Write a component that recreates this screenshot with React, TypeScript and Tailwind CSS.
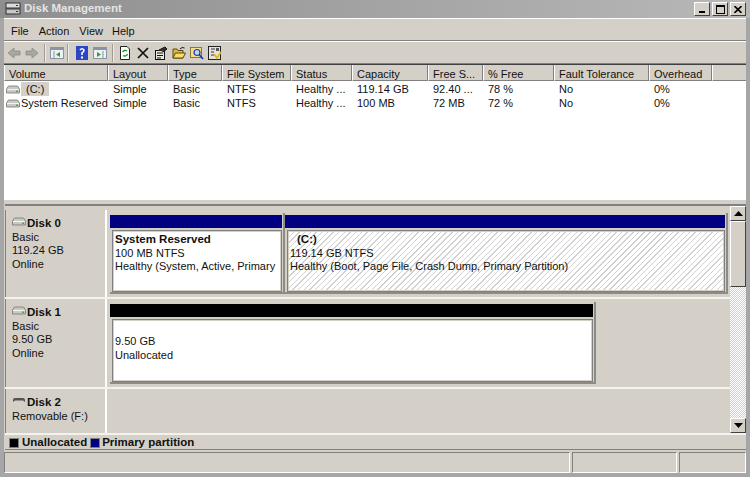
import React from 'react';

const columns = [
  { label: 'Volume', w: 'w-[104px]' },
  { label: 'Layout', w: 'w-[60px]' },
  { label: 'Type', w: 'w-[54px]' },
  { label: 'File System', w: 'w-[69px]' },
  { label: 'Status', w: 'w-[61px]' },
  { label: 'Capacity', w: 'w-[76px]' },
  { label: 'Free S...', w: 'w-[55px]' },
  { label: '% Free', w: 'w-[71px]' },
  { label: 'Fault Tolerance', w: 'w-[95px]' },
  { label: 'Overhead', w: 'w-[63px]' },
];

const rows = [
  ['(C:)', 'Simple', 'Basic', 'NTFS', 'Healthy ...', '119.14 GB', '92.40 ...', '78 %', 'No', '0%'],
  ['System Reserved', 'Simple', 'Basic', 'NTFS', 'Healthy ...', '100 MB', '72 MB', '72 %', 'No', '0%'],
];

function DriveIcon({ removable }: { removable?: boolean }) {
  if (removable) {
    return (
      <svg width="14" height="8" viewBox="0 0 14 8" className="shrink-0">
        <path d="M1 6 L1 4 Q1 2 3 2 L11 2 Q13 2 13 4 L13 6 L11 4.5 L3 4.5 Z" fill="#55554f" />
      </svg>
    );
  }
  return (
    <svg width="14" height="9" viewBox="0 0 14 9" className="shrink-0">
      <path d="M2.5 1 H11.5 L13.5 4 V8 H0.5 V4 Z" fill="#c8c8c4" stroke="#77776f" strokeWidth="0.8" />
      <path d="M1 4.5 H13" stroke="#f4f4f2" />
      <rect x="10" y="5.5" width="2" height="1.5" fill="#3fb53f" />
    </svg>
  );
}

function ToolIcon({ children }: { children: React.ReactNode }) {
  return (
    <svg width="14" height="14" viewBox="0 0 14 14" className="shrink-0">
      {children}
    </svg>
  );
}

function Arrow({ right }: { right?: boolean }) {
  return (
    <svg width="14" height="12" viewBox="0 0 14 12" className="shrink-0">
      <path
        d={right ? 'M1 4 H7 V1 L13 6 L7 11 V8 H1 Z' : 'M13 4 H7 V1 L1 6 L7 11 V8 H13 Z'}
        fill="#a8a8a2"
        stroke="#8c8c86"
        strokeWidth="0.8"
      />
    </svg>
  );
}

function PaneIcon({ right }: { right?: boolean }) {
  return (
    <ToolIcon>
      <rect x="0.5" y="1.5" width="13" height="11" fill="#eef0f4" stroke="#8a94a4" />
      <rect x="1" y="2" width="12" height="2" fill="#8a94a4" />
      <path d={right ? 'M4 6 L8 8.5 L4 11 Z' : 'M10 6 L6 8.5 L10 11 Z'} fill="#2f9e3f" />
      <path d={right ? 'M10 5 V12' : 'M4 5 V12'} stroke="#8a94a4" />
    </ToolIcon>
  );
}

function Sep() {
  return <div className="w-[2px] h-[18px] border-l border-[#a09c94] bg-white/60 shrink-0" />;
}

function Toolbar() {
  return (
    <div className="h-[23px] flex items-center pl-[3px] border-t border-t-white border-b border-b-[#808080] bg-[#d4d0c8]">
      <div className="flex gap-[4px] items-center"><Arrow /><Arrow right /></div>
      <div className="ml-[5px]"><Sep /></div>
      <div className="ml-[4px]"><PaneIcon /></div>
      <div className="ml-[3px]"><Sep /></div>
      <div className="ml-[6px]">
        <ToolIcon>
          <rect x="1" y="0" width="12" height="14" fill="#2b45c4" />
          <path d="M5 4 Q7 1.5 9 4 Q9 6 7 7 V9" stroke="#fff" strokeWidth="1.6" fill="none" />
          <rect x="6" y="10.5" width="2" height="2" fill="#fff" />
        </ToolIcon>
      </div>
      <div className="ml-[4px]"><PaneIcon right /></div>
      <div className="ml-[5px]"><Sep /></div>
      <div className="ml-[4px] flex items-center gap-[4px]">
        <ToolIcon>
          <path d="M2.5 0.5 H9 L11.5 3 V13.5 H2.5 Z" fill="#fff" stroke="#222" />
          <path d="M4.5 6 A3 3 0 0 1 9 5" stroke="#16a02a" strokeWidth="1.4" fill="none" />
          <path d="M9.5 8 A3 3 0 0 1 5 9.5" stroke="#16a02a" strokeWidth="1.4" fill="none" />
        </ToolIcon>
        <ToolIcon>
          <path d="M2 2 L12 12 M12 2 L2 12" stroke="#111" strokeWidth="1.7" />
        </ToolIcon>
        <ToolIcon>
          <rect x="1.5" y="4.5" width="9" height="9" fill="#e8e8e0" stroke="#111" />
          <path d="M3 7 H9 M3 9.5 H9 M3 12 H7" stroke="#111" />
          <path d="M5 4 L11 1 L13 3 L9 6" fill="#333" stroke="#111" />
        </ToolIcon>
        <ToolIcon>
          <path d="M1 3 H5 L6 4.5 H11 V12 H1 Z" fill="#e0b93c" stroke="#5c4a10" />
          <path d="M1 12 L3.5 7 H13.5 L11 12 Z" fill="#f6dc6c" stroke="#5c4a10" />
          <path d="M8 3 Q10 0.5 12.5 2" stroke="#111" fill="none" />
        </ToolIcon>
        <ToolIcon>
          <rect x="0.5" y="1.5" width="11" height="10" fill="#f4e08a" stroke="#8a7a30" />
          <circle cx="7" cy="6.5" r="3" fill="#bcd6f4" stroke="#2038b0" strokeWidth="1.2" />
          <path d="M9.5 9 L13 13" stroke="#2038b0" strokeWidth="1.8" />
        </ToolIcon>
        <ToolIcon>
          <rect x="0.5" y="0.5" width="12" height="13" fill="#e4e2da" stroke="#222" />
          <path d="M3 3 H7 M3 6 H6 M3 9 H6" stroke="#333" />
          <rect x="8" y="2" width="3" height="3" fill="#555" />
          <path d="M6 8 L9 12 L13 6" stroke="#d8b820" strokeWidth="1.8" fill="none" />
        </ToolIcon>
      </div>
    </div>
  );
}

function VolumeTable() {
  return (
    <div className="h-[136px] shrink-0 bg-white border-t border-[#404040] flex flex-col overflow-hidden">
      <div className="h-[16px] flex bg-[#d4d0c8] shrink-0">
        {columns.map((c) => (
          <div
            key={c.label}
            className={`${c.w} shrink-0 pl-[4px] leading-[18px] border-l border-l-white border-r border-r-[#808080] border-b border-b-[#808080] whitespace-nowrap overflow-hidden`}
          >
            {c.label}
          </div>
        ))}
        <div className="flex-1 border-l border-l-white border-b border-b-[#808080]" />
      </div>
      <div className="pt-px">
        {rows.map((r, idx) => (
          <div key={idx} className="flex h-[14px] leading-[14px]">
            {r.map((cell, i) => (
              <div key={i} className={`${columns[i].w} shrink-0 whitespace-nowrap overflow-hidden ${i === 0 ? 'pl-[2px] flex items-center' : 'pl-[5px]'}`}>
                {i === 0 ? (
                  <>
                    <DriveIcon />
                    {idx === 0 ? (
                      <span className="bg-[#d4d0c8] pl-[5px] pr-[5px] ml-[1px]">{cell}</span>
                    ) : (
                      <span className="ml-px">{cell}</span>
                    )}
                  </>
                ) : (
                  cell
                )}
              </div>
            ))}
          </div>
        ))}
      </div>
    </div>
  );
}

function DiskLabel({ name, lines, removable, h }: { name: string; lines: string[]; removable?: boolean; h: string }) {
  return (
    <div className={`w-[102px] ${h} shrink-0 pl-[6px] pt-[7px] leading-[13.7px] border-r-2 border-r-white border-l border-l-[#808080]`}>
      <div className="flex items-center gap-[1px] font-bold">
        <div className="mt-[-5px]"><DriveIcon removable={removable} /></div>
        <span className="text-[11.5px]">{name}</span>
      </div>
      {lines.map((l) => (
        <div key={l}>{l}</div>
      ))}
    </div>
  );
}

function Partition({ w, bar, hatched, children }: { w: string; bar: string; hatched?: boolean; children: React.ReactNode }) {
  return (
    <div className={`${w} shrink-0 h-full border-r-2 border-b-2 border-r-[#8e8b83] border-b-[#8e8b83] pt-[2px] pr-px flex flex-col`}>
      <div className={`h-[13px] shrink-0 ${bar}`} />
      <div className="h-[2px] shrink-0" />
      <div className={`flex-1 ml-[2px] border-2 border-[#d4d0c8] outline outline-1 outline-[#808080] outline-offset-[-1px] px-px leading-[13.7px] ${hatched ? 'bg-[repeating-linear-gradient(135deg,#ffffff_0px,#ffffff_3px,#d2d2d2_3px,#d2d2d2_4px)]' : 'bg-white'}`}>
        {children}
      </div>
    </div>
  );
}

function DiskRow({ h, children, label }: { h: string; label: React.ReactNode; children?: React.ReactNode }) {
  return (
    <div className={`${h} shrink-0 flex border-b-2 border-b-[#f4f2ec]`}>
      {label}
      <div className="flex-1 flex pt-[3px] pb-[3px] pl-[3px]">{children}</div>
    </div>
  );
}

function Scrollbar() {
  return (
    <div className="w-[16px] shrink-0 flex flex-col bg-[repeating-conic-gradient(#d4d0c8_0_25%,#ffffff_0_50%)] bg-[length:2px_2px]">
      <ScrollButton up />
      <div className="h-[66px] shrink-0 bg-[#d4d0c8] border-r border-b border-r-[#404040] border-b-[#404040] border-l border-t border-l-white border-t-white" />
      <div className="flex-1" />
      <ScrollButton />
    </div>
  );
}

function ScrollButton({ up }: { up?: boolean }) {
  return (
    <div className="h-[15px] shrink-0 bg-[#d4d0c8] border-r border-b border-r-[#404040] border-b-[#404040] border-l border-t border-l-white border-t-white flex items-center justify-center">
      <svg width="9" height="5" viewBox="0 0 9 5">
        <path d={up ? 'M4.5 0 L9 5 H0 Z' : 'M0 0 H9 L4.5 5 Z'} fill="#000" />
      </svg>
    </div>
  );
}

function DiskArea() {
  return (
    <div className="flex-1 min-h-0 flex flex-col border-t-2 border-t-[#808080] mt-[4px] ml-px">
      <div className="flex-1 min-h-0 flex">
        <div className="flex-1 min-w-0 overflow-hidden pt-[4px]">
          <DiskRow h="h-[89px]" label={<DiskLabel h="h-full" name="Disk 0" lines={['Basic', '119.24 GB', 'Online']} />}>
            <Partition w="w-[175px]" bar="bg-[#000080]">
              <div className="font-bold text-[11.5px] mt-px">System Reserved</div>
              <div>100 MB NTFS</div>
              <div className="whitespace-nowrap">Healthy (System, Active, Primary</div>
            </Partition>
            <Partition w="w-[443px]" bar="bg-[#000080]" hatched>
              <div className="font-bold text-[11.5px] mt-px pl-[7px]">(C:)</div>
              <div>119.14 GB NTFS</div>
              <div className="whitespace-nowrap">Healthy (Boot, Page File, Crash Dump, Primary Partition)</div>
            </Partition>
          </DiskRow>
          <DiskRow h="h-[90px]" label={<DiskLabel h="h-full" name="Disk 1" lines={['Basic', '9.50 GB', 'Online']} />}>
            <Partition w="w-[486px]" bar="bg-black">
              <div className="mt-[14px]">9.50 GB</div>
              <div>Unallocated</div>
            </Partition>
          </DiskRow>
          <div className="h-[46px] flex">
            <DiskLabel h="h-full" name="Disk 2" lines={['Removable (F:)']} removable />
          </div>
        </div>
        <Scrollbar />
      </div>
      <div className="h-[17px] shrink-0 border-t-2 border-t-[#f4f2ec] border-b border-b-[#808080] flex items-center pt-[2px] pl-[4px] font-bold text-[11.5px] leading-none">
        <span className="w-[10px] h-[10px] bg-black border border-[#808080] shrink-0" />
        <span className="ml-[3px]">Unallocated</span>
        <span className="w-[10px] h-[10px] bg-[#000080] border border-[#808080] ml-[3px] shrink-0" />
        <span className="ml-[2px]">Primary partition</span>
      </div>
    </div>
  );
}

function WinButton({ children }: { children: React.ReactNode }) {
  return (
    <div className="w-[16px] h-[14px] bg-[#d4d0c8] border-t border-l border-t-white border-l-white border-r border-b border-r-[#404040] border-b-[#404040] flex items-center justify-center">
      {children}
    </div>
  );
}

export default function App() {
  return (
    <div className="w-[750px] h-[477px] overflow-hidden bg-[#a6a6a6] flex flex-col font-['Liberation_Sans',sans-serif] text-[11px] text-[#111]">
      <div className="h-[18px] shrink-0 flex items-center pl-[5px] pr-[4px] bg-gradient-to-r from-[#8f8f8f] to-[#b8b8b8]">
        <svg width="16" height="14" viewBox="0 0 16 14" className="shrink-0">
          <rect x="1" y="1" width="14" height="5" fill="#dcdcdc" stroke="#333" />
          <rect x="1" y="7" width="14" height="5" fill="#c8c8c8" stroke="#333" />
          <rect x="11" y="3" width="2" height="1" fill="#333" />
          <rect x="11" y="9" width="2" height="1" fill="#333" />
        </svg>
        <span className="ml-[3px] font-bold text-[11.5px] text-[#e4e4e4]">Disk Management</span>
        <div className="ml-auto flex gap-[2px]">
          <WinButton>
            <div className="w-[6px] h-[2px] bg-black mt-[6px]" />
          </WinButton>
          <WinButton>
            <div className="w-[9px] h-[9px] border border-black border-t-2" />
          </WinButton>
          <WinButton>
            <svg width="8" height="7" viewBox="0 0 8 7">
              <path d="M0.5 0 L7.5 7 M7.5 0 L0.5 7" stroke="#000" strokeWidth="1.6" />
            </svg>
          </WinButton>
        </div>
      </div>
      <div className="flex-1 min-h-0 mx-[4px] mb-[4px] bg-[#d4d0c8] flex flex-col border-t border-t-white">
        <div className="h-[22px] shrink-0 flex items-center gap-[10px] pl-[7px] pt-[3px] border-b border-b-[#808080]">
          <span>File</span>
          <span>Action</span>
          <span>View</span>
          <span className="ml-[-1px]">Help</span>
        </div>
        <Toolbar />
        <VolumeTable />
        <DiskArea />
        <div className="h-[21px] shrink-0 flex mt-[2px] gap-[2px]">
          <div className="flex-1 border-t border-l border-t-[#808080] border-l-[#808080] border-r border-b border-r-white border-b-white" />
          <div className="w-[105px] border-t border-l border-t-[#808080] border-l-[#808080] border-r border-b border-r-white border-b-white" />
          <div className="w-[67px] border-t border-l border-t-[#808080] border-l-[#808080] border-r border-b border-r-white border-b-white" />
        </div>
      </div>
    </div>
  );
}
